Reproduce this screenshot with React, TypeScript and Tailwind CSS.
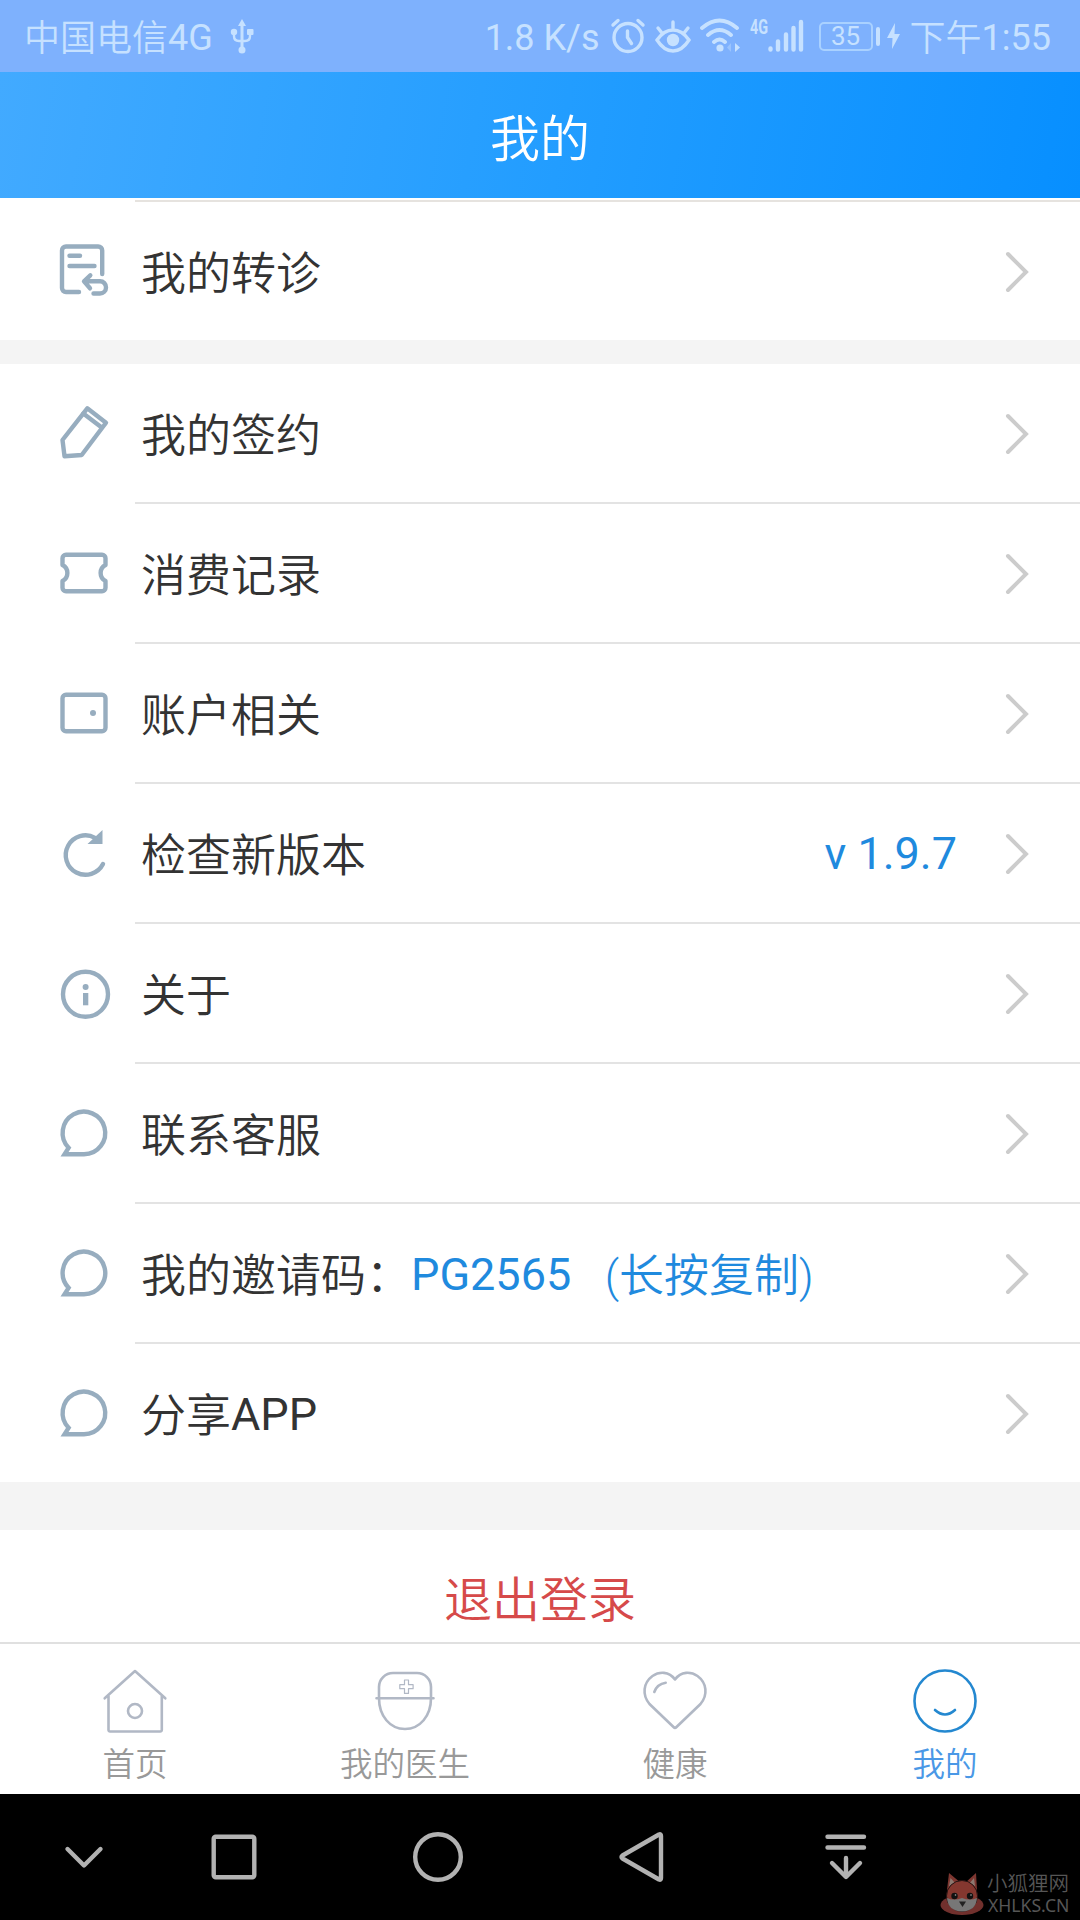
import React, { useState } from "react";

type IconName = "referral" | "pen" | "ticket" | "wallet" | "refresh" | "info" | "chat";

interface MenuItem {
  icon: IconName;
  label: string;
  latin?: string;
  code?: string;
  hint?: string;
  value?: string;
}

const menuItems: MenuItem[] = [
  { icon: "pen", label: "我的签约" },
  { icon: "ticket", label: "消费记录" },
  { icon: "wallet", label: "账户相关" },
  { icon: "refresh", label: "检查新版本", value: "v 1.9.7" },
  { icon: "info", label: "关于" },
  { icon: "chat", label: "联系客服" },
  { icon: "chat", label: "我的邀请码：", code: "PG2565   ", hint: "(长按复制)" },
  { icon: "chat", label: "分享", latin: "APP" },
];

const iconShapes: Record<IconName, React.ReactNode> = {
  referral: (
    <>
      <path d="M48.2 33V9.5a4 4 0 0 0-4-4H12a4 4 0 0 0-4 4V47a4 4 0 0 0 4 4h13" />
      <path d="M15.5 14.8H26M15.5 25H40.5" />
      <path d="M36.3 34.3L30 40.3l6 7M31 40.3h15a6 6 0 0 1 6 6.2a6 6 0 0 1-6 6h-6.5" />
    </>
  ),
  pen: (
    <>
      <path d="M33.3 5.3L52 19.7L27.7 52L10.5 53.3L8.5 37z" />
      <path d="M29.3 10.5L47.7 24.5" />
    </>
  ),
  ticket: (
    <path d="M12 11.7H48a3.5 3.5 0 0 1 3.5 3.5V22A9 9 0 0 0 51.5 38V44.8a3.5 3.5 0 0 1-3.5 3.5H12a3.5 3.5 0 0 1-3.5-3.5V38A9 9 0 0 0 8.5 22V15.2a3.5 3.5 0 0 1 3.5-3.5z" />
  ),
  wallet: (
    <>
      <rect x="8.5" y="11.7" width="43" height="36.6" rx="3.5" />
      <circle cx="39" cy="30" r="3" fill="#97adbf" stroke="none" />
    </>
  ),
  refresh: (
    <>
      <path d="M49 41A19.7 19.7 0 1 1 41 14.8" />
      <path d="M48.5 7V21H33.5z" fill="#97adbf" stroke="none" />
    </>
  ),
  info: (
    <>
      <circle cx="31.5" cy="31.3" r="22.5" />
      <circle cx="31.6" cy="24" r="3" fill="#97adbf" stroke="none" />
      <rect x="29" y="30" width="5.3" height="12.3" fill="#97adbf" stroke="none" />
    </>
  ),
  chat: <path d="M30 51.3H10.5L14.6 44.8A21.3 21.3 0 1 1 30 51.3z" strokeLinejoin="miter" />,
};

const MenuIcon = ({ name }: { name: IconName }) => (
  <svg
    className="w-[60px] h-[60px] shrink-0"
    viewBox="0 0 60 60"
    fill="none"
    stroke="#97adbf"
    strokeWidth="4.4"
    strokeLinecap="round"
    strokeLinejoin="round"
  >
    {iconShapes[name]}
  </svg>
);

const MenuRow = ({ item }: { item: MenuItem }) => (
  <div className="h-[138px] flex items-center pl-[54px] pr-[51px] text-[45px] leading-[60px] text-[#333]">
    <MenuIcon name={item.icon} />
    <span className="ml-[27px] pt-[8px] whitespace-pre font-[350]">
      {item.label}
      {item.latin && <span className="font-normal leading-none align-[2px]">{item.latin}</span>}
      {item.code && <span className="font-normal leading-none align-[2px] text-[#1f8ade]">{item.code}</span>}
      {item.hint && <span className="text-[#1f8ade]">{item.hint}</span>}
    </span>
    <span className="ml-auto pt-[2px] text-[#1f8ade]">{item.value}</span>
    <svg
      className="ml-[48px] mt-px w-6 h-11 shrink-0"
      viewBox="0 0 24 44"
      fill="none"
      stroke="#ccc"
      strokeWidth="4"
      strokeLinecap="round"
    >
      <path d="M3 4L21 22L3 40" />
    </svg>
  </div>
);

const StatusBar = () => (
  <div className="h-[72px] flex items-center bg-[#7eb1fd] text-[#c6e1ff] text-[36px] leading-[42px] pl-[24px] pr-[29px] whitespace-pre">
    <span className="pt-[6px] font-[350]">
      中国电信<span className="font-normal leading-none align-[1px]">4G</span>
    </span>
    {/* USB */}
    <svg className="w-6 h-9 ml-[17px]" viewBox="0 0 24 36" fill="currentColor">
      <path d="M12 1l4 7h-2.500v22h-3V8H8z" />
      <circle cx="12" cy="32" r="3.5" />
      <circle cx="4" cy="14" r="3.2" />
      <rect x="17" y="11" width="6.5" height="6" rx="1" />
      <path d="M4 15v3q0 5 5 5h6q5 0 5-5v-3" fill="none" stroke="currentColor" strokeWidth="2.4" />
    </svg>

    <span className="ml-auto pt-[3px] mr-[-1px]">1.8 K/s</span>
    {/* Alarm */}
    <svg className="w-9 h-9 ml-[11px]" viewBox="0 0 36 36" fill="none" stroke="currentColor" strokeWidth="3.4" strokeLinecap="round">
      <circle cx="18" cy="19.5" r="14" />
      <path d="M17.500 13v6.500l4 6M3 7l5-4.500M33 7l-5-4.500" />
    </svg>
    {/* Eye */}
    <svg className="w-9 h-9 ml-[9px]" viewBox="0 0 36 36" fill="none" stroke="currentColor" strokeWidth="3.4" strokeLinecap="round">
      <path d="M2 22Q9 12 18 12T34 22Q27 33 18 33T2 22z" />
      <path d="M18 4v6M3 10l4 5M33 10l-4 5" />
      <circle cx="18" cy="22" r="6.2" fill="currentColor" stroke="none" />
    </svg>
    {/* Wifi */}
    <svg className="w-10 h-9 ml-[9px]" viewBox="0 0 40 36" fill="none" stroke="currentColor" strokeWidth="3.8" strokeLinecap="round">
      <path d="M2 10Q19.5-5 37 10M8 17Q19.5 7 31 17M14 24Q19.5 19 25 24" />
      <circle cx="20" cy="30" r="3.6" fill="currentColor" stroke="none" />
      <path d="M35 25l5 4.500-5 4.500z" fill="currentColor" stroke="none" />
      <path d="M31 25v9l-4-4.500z" fill="currentColor" stroke="none" opacity=".4" />
    </svg>
    <span className="ml-[10px] mb-[19px] w-[18px] text-[20px] leading-5 font-bold scale-x-[.72] origin-left">4G</span>
    {/* Signal */}
    <svg className="w-9 h-9" viewBox="0 0 36 36" fill="none" stroke="currentColor" strokeWidth="4.4" strokeLinecap="round">
      <path d="M2.5 30.500v1M10 23.500v8M18 16.500v15M25.500 10v21.500M33 4v27.500" />
    </svg>
    <div className="ml-[15px] w-[54px] h-[29px] border-2 border-[#a9d1ff] rounded-[5px] flex items-center justify-center text-[26px] leading-none">
      35
    </div>
    <div className="ml-[3px] w-1 h-[19px] rounded-sm bg-[#c6e1ff]" />
    <svg className="ml-[7px] w-[13px] h-[26px]" viewBox="0 0 13 26" fill="currentColor">
      <path d="M8 0L0 15h5.500L5 26l8-15H7.500z" />
    </svg>
    <span className="ml-[10px] pt-[6px] font-[350]">
      下午<span className="font-normal leading-none align-[1px]">1:55</span>
    </span>
  </div>
);

const tabs = [
  {
    label: "首页",
    icon: (
      <>
        <path d="M2.7 30.3L33 3L63.3 30.3M6.5 28V62a1.5 1.5 0 0 0 1.5 1.5H58.3a1.5 1.5 0 0 0 1.5-1.5V28" />
        <circle cx="33" cy="43" r="7" />
      </>
    ),
  },
  {
    label: "我的医生",
    icon: (
      <>
        <path d="M7 30V19A14 14 0 0 1 21 5H45A14 14 0 0 1 59 19V30C59 48 48 61 33 61S7 48 7 30M4.5 30.3H61.5" />
        <path
          d="M32.500 12h4v4.700h4.600v4h-4.600v4.700h-4v-4.700h-4.700v-4h4.700z"
          strokeWidth="1.2"
        />
      </>
    ),
  },
  {
    label: "健康",
    icon: (
      <>
        <path d="M33 11.500C27 3 17 3.500 10.500 8C1 15 0 27 7.500 36L31.500 59Q33 60.500 34.500 59L58.500 36C66 27 65 15 55.500 8C49 3.500 39 3 33 11.500z" />
        <path d="M12.300 24Q15 16 23.700 14.700" />
      </>
    ),
  },
  {
    label: "我的",
    icon: (
      <>
        <circle cx="33" cy="33" r="30.5" />
        <path d="M23 42Q33 51 43 42" />
      </>
    ),
  },
];

const TabBar = () => {
  const [active, setActive] = useState(3);

  return (
    <div className="h-[152px] border-t-2 border-[#e0e0e0] bg-white grid grid-cols-4">
      {tabs.map((tab, index) => (
        <button
          key={tab.label}
          onClick={() => setActive(index)}
          className="flex flex-col items-center pt-6"
        >
          <svg
            className={index === active ? "w-[66px] h-[66px] text-[#2488d0]" : "w-[66px] h-[66px] text-[#b1b8c5]"}
            viewBox="0 0 66 66"
            fill="none"
            stroke="currentColor"
            strokeWidth="2.6"
            strokeLinecap="round"
            strokeLinejoin="round"
          >
            {tab.icon}
          </svg>
          <span
            className={
              index === active
                ? "mt-[11px] text-[32.5px] leading-[40px] font-[350] text-[#4a98e6]"
                : "mt-[11px] text-[32.5px] leading-[40px] font-[350] text-[#999]"
            }
          >
            {tab.label}
          </span>
        </button>
      ))}
    </div>
  );
};

const navShapes = [
  <path d="M13.5 22L30 38.500L46.500 22" />,
  <rect x="9.7" y="9.7" width="40.6" height="40.6" rx="2" />,
  <circle cx="30" cy="30" r="22.8" />,
  <path d="M10.5 28.500L47 7.500Q49 6.700 49 9V51Q49 53.300 47 52.500L10.500 31.500Q8.500 30 10.500 28.500z" />,
  <path d="M11.5 9.700H48M11.500 20.500H48M30 31V49.500M16 36L30 50L44 36" />,
];

const NavBar = () => (
  <div className="relative h-[126px] bg-black flex items-center pl-[54px] gap-[144px]">
    {navShapes.map((shape, index) => (
      <svg
        key={index}
        className={index === 1 ? "w-[60px] h-[60px] -ml-[54px]" : "w-[60px] h-[60px]"}
        viewBox="0 0 60 60"
        fill="none"
        stroke="#b2b2b2"
        strokeWidth="4.4"
        strokeLinecap="round"
        strokeLinejoin="round"
      >
        {shape}
      </svg>
    ))}

    {/* Site badge over the corner */}
    <div className="absolute left-[940px] top-[78px] flex">
      <svg className="w-[45px] h-[44px]" viewBox="0 0 45 44">
        <ellipse cx="22" cy="33" rx="21.5" ry="10" fill="#71302d" />
        <path d="M7 18L9 1L21 11zM37 18L36 1L25 11z" fill="#7d3630" />
        <path d="M9 14L10.500 6L16 12zM35 14L34 6L29 12z" fill="#8c7870" />
        <circle cx="22" cy="24" r="15.5" fill="#84372f" stroke="#241312" />
        <path d="M7 26q7 3 15 0q8 3 15 0q-1 13-15 13.500Q8 39 7 26z" fill="#777" />
        <circle cx="14.5" cy="24" r="3.2" fill="#111" />
        <circle cx="30" cy="24" r="3.2" fill="#111" />
        <circle cx="15.5" cy="23" r=".8" fill="#aaa" />
        <circle cx="31" cy="23" r=".8" fill="#aaa" />
        <path d="M19 29.500h7l-3.500 5.500z" fill="#222" />
      </svg>
      <div className="ml-[2px] text-[#565656]">
        <p className="pt-[2px] text-[20.5px] leading-[21px] font-[350]">小狐狸网</p>
        <p className="ml-px pt-[2px] text-[17.6px] leading-[17px] font-['Noto_Sans']">XHLKS.CN</p>
      </div>
    </div>
  </div>
);

const App: React.FC = () => {
  return (
    <div className="w-[1080px] h-[1920px] flex flex-col overflow-hidden bg-white font-[Roboto,'Noto_Sans_CJK_SC',sans-serif]">
      <StatusBar />

      <header className="h-[126px] flex items-center justify-center pt-[9px] bg-[linear-gradient(100deg,#42aaff_0%,#229dff_52%,#078fff_100%)] text-white text-[50px] leading-[60px] font-[350]">
        我的
      </header>

      <main className="h-[1444px] overflow-hidden">
        <div className="mt-[2px] ml-[135px] h-[2px] bg-[#e6e3df]" />
        <MenuRow item={{ icon: "referral", label: "我的转诊" }} />
        <div className="h-6 bg-[#f4f4f4]" />

        {menuItems.map((item, index) => (
          <React.Fragment key={item.label}>
            {index > 0 && <div className="ml-[135px] h-[2px] bg-[#e3e3e3]" />}
            <MenuRow item={item} />
          </React.Fragment>
        ))}

        <div className="h-12 bg-[#f4f4f4]" />
        <button className="w-full h-[141px] text-[48px] leading-[60px] font-[350] text-[#d64a4a]">
          退出登录
        </button>
      </main>

      <TabBar />
      <NavBar />
    </div>
  );
};

export default App;
